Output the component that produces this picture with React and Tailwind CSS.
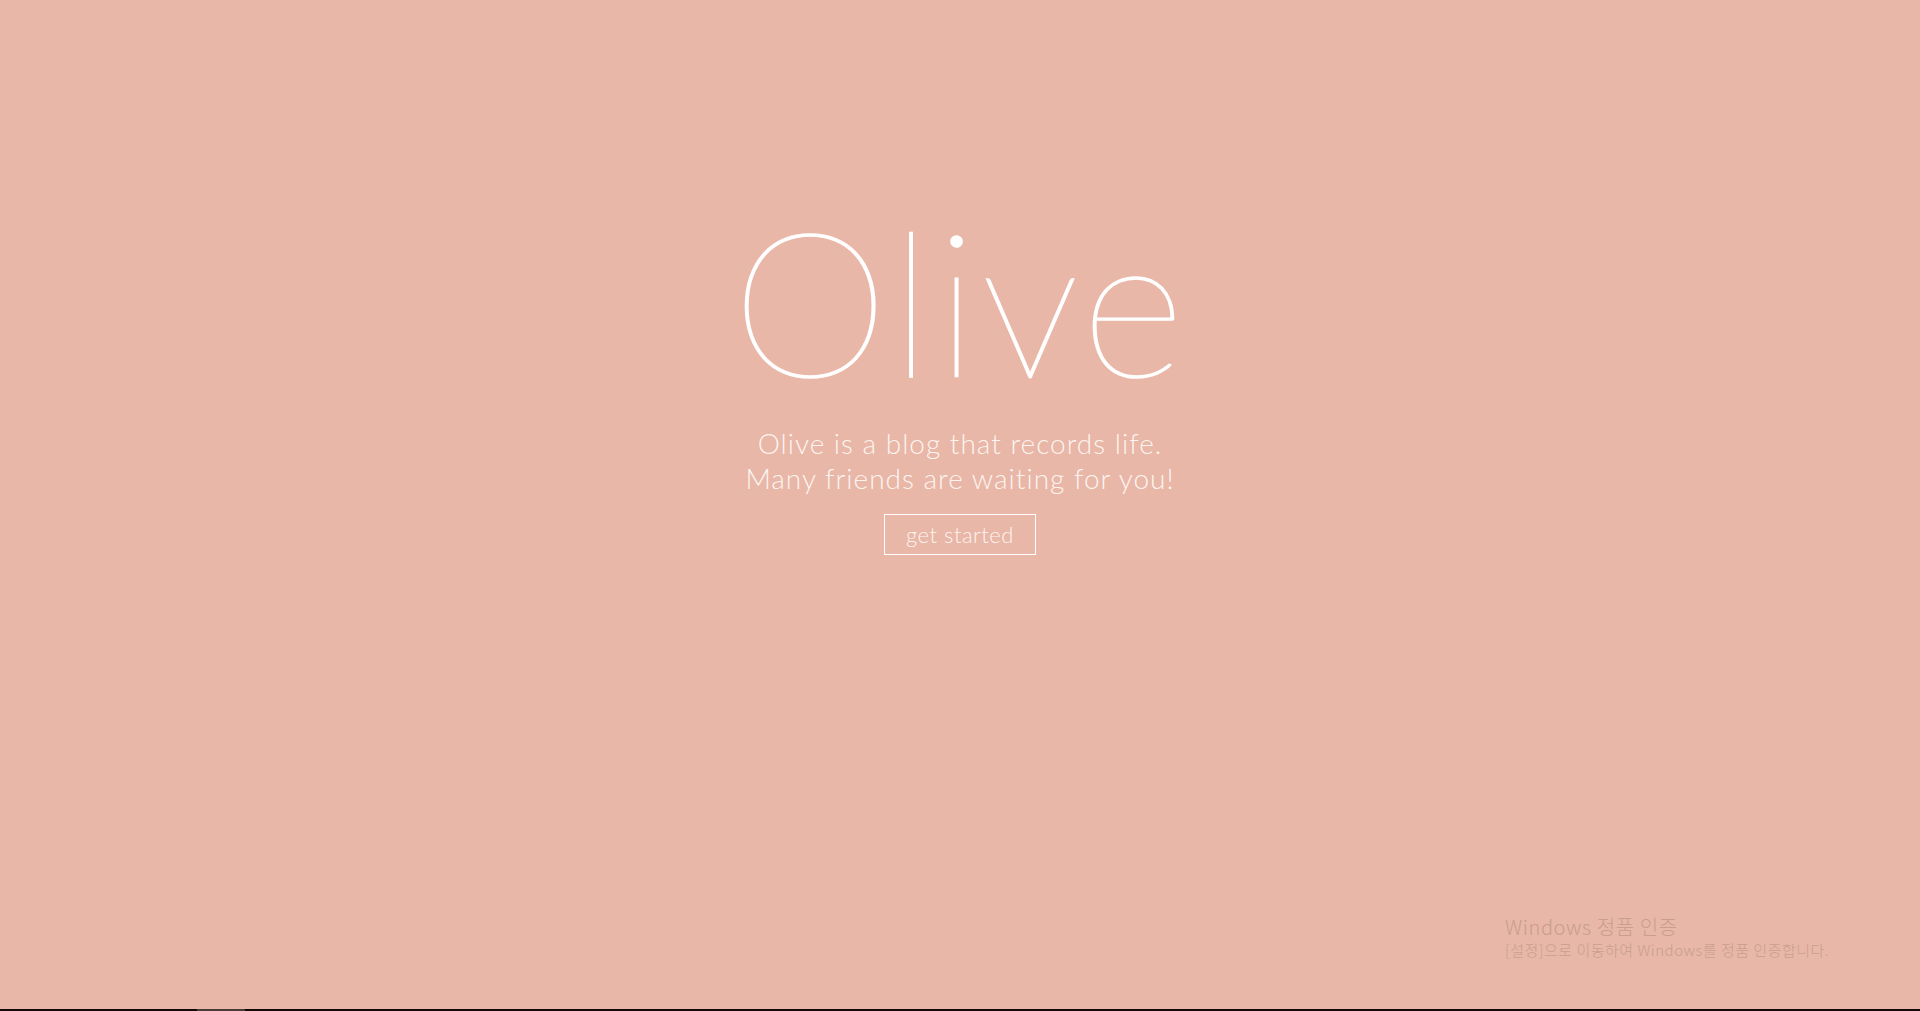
import React from "react";

export default function App() {
    return (
        <div className="relative w-full h-[1011px] bg-[#e8b7a7] overflow-hidden flex flex-col" style={{ fontFamily: "Lato, 'Open Sans', sans-serif" }}>
            <main className="flex-1 flex flex-col items-center pt-[200px] text-white">
                <h1 className="text-[200px] leading-none font-thin tracking-[4px] [-webkit-text-stroke:1.5px_white]">Olive</h1>
                <p className="mt-[26px] text-[28px] leading-[35px] font-light tracking-[1px] text-center text-[#fdf4f0]">
                    Olive is a blog that records life.
                    <br />
                    Many friends are waiting for you!
                </p>
                <button
                    type="button"
                    className="mt-[18px] w-[152px] h-[41px] border border-white text-[22px] font-light tracking-[0.5px] text-[#fdf4f0]"
                >
                    get started
                </button>
            </main>

            {/* windows activation watermark */}
            <div className="absolute left-[1505px] top-[914px] text-[#c99d90] font-light" style={{ fontFamily: "'Noto Sans CJK KR', 'Noto Sans', sans-serif" }}>
                <div className="text-[20px] leading-[26px] tracking-[0.6px]">Windows 정품 인증</div>
                <div className="text-[15px] leading-[20px] tracking-[0.5px]">[설정]으로 이동하여 Windows를 정품 인증합니다.</div>
            </div>

            <div className="h-[2px] bg-[#120606] flex">
                <div className="ml-[197px] w-[48px] bg-[#4a3a36]" />
            </div>
        </div>
    );
}
